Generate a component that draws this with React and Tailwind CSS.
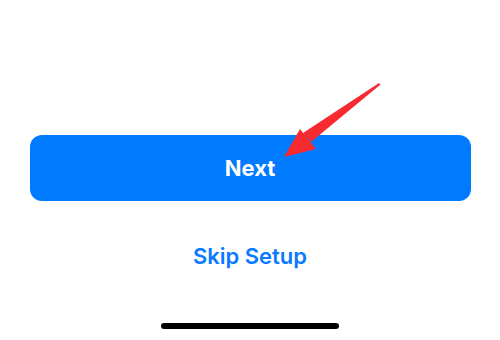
export default function App() {
  return (
    <div className="relative flex h-[340px] w-[500px] flex-col items-center bg-white font-['Inter','Liberation_Sans',sans-serif]">
      <button
        type="button"
        className="mt-[135px] flex h-[66px] w-[441px] items-center justify-center rounded-[12px] bg-[#007aff] text-[22px] font-bold text-white"
      >
        Next
      </button>
      <button type="button" className="mt-[41px] text-[22px] font-semibold leading-[28px] text-[#0a7aff]">
        Skip Setup
      </button>
      <div className="mt-auto mb-[11px] h-[6px] w-[178px] rounded-full bg-black" />

      {/* red annotation arrow */}
      <svg className="absolute left-0 top-0" width="500" height="340" viewBox="0 0 500 340">
        <path d="M379 83 L380.5 84.5 L311 142 L303 133 Z" fill="#f72b2f" />
        <path d="M284 157 L300 129 L316 149 Z" fill="#f72b2f" />
      </svg>
    </div>
  )
}
